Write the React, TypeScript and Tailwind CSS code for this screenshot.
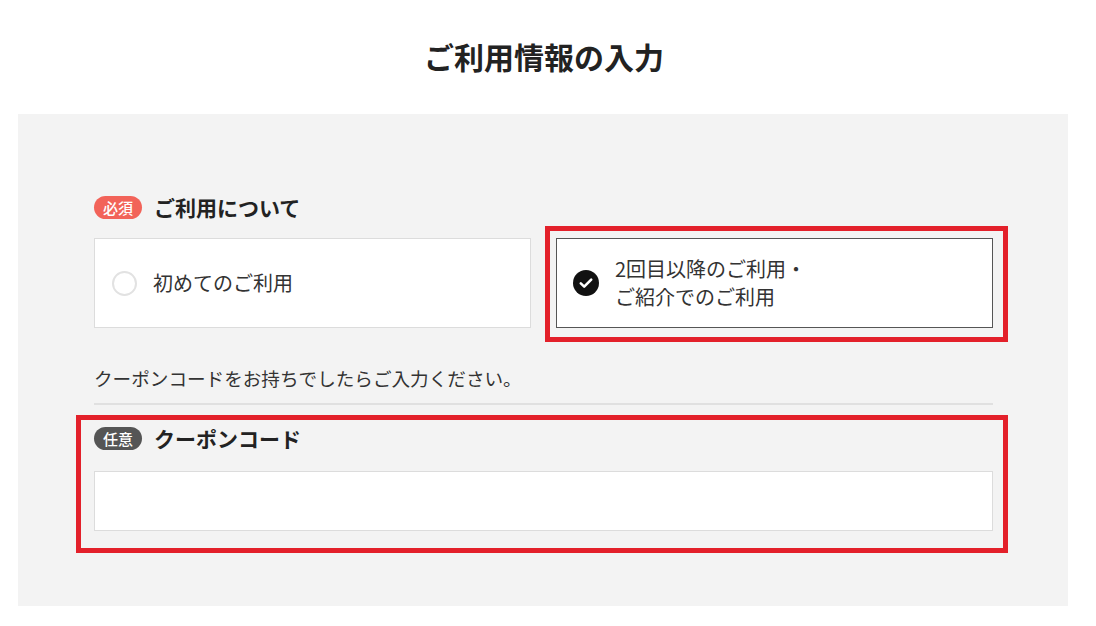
import React from "react";

const font = {
  fontFamily: '"Noto Sans CJK JP", "Noto Sans", sans-serif',
};

function CheckCircle() {
  return (
    <svg width="26" height="26" viewBox="0 0 26 26" className="shrink-0">
      <circle cx="13" cy="13" r="13" fill="#111" />
      <path
        d="M7.8 13.4 L11.2 16.6 L18.2 9.6"
        fill="none"
        stroke="#fff"
        strokeWidth="2.6"
        strokeLinecap="round"
        strokeLinejoin="round"
      />
    </svg>
  );
}

export default function App() {
  return (
    <div
      className="w-[1096px] h-[626px] bg-white text-[#333]"
      style={font}
    >
      <div className="h-[114px] flex items-center justify-center pr-[8px]">
        <h1 className="text-[30px] font-bold text-[#222] leading-none -mt-[2px]">
          ご利用情報の入力
        </h1>
      </div>
      <div className="ml-[18px] mr-[28px] bg-[#f3f3f3] pt-[82px] pb-[75px] pl-[76px] pr-[75px]">
        <div className="relative">
          <div className="flex items-center h-[23px] gap-[12px]">
            <span className="h-[23px] w-[48px] rounded-full bg-[#f26359] text-white text-[15px] font-medium leading-none flex items-center justify-center">
              必須
            </span>
            <span className="text-[21px] font-bold text-[#222] leading-none">
              ご利用について
            </span>
          </div>
          <div className="grid grid-cols-2 gap-[25px] mt-[19px]">
            <div className="h-[90px] bg-white border border-[#dcdcdc] flex items-center pl-[17px] gap-[16px]">
              <span className="w-[25px] h-[25px] rounded-full border-2 border-[#e2e2e2] bg-white shrink-0" />
              <span className="text-[20px] leading-[28px]">初めてのご利用</span>
            </div>
            <div className="h-[90px] bg-white border border-[#555] flex items-center pl-[16px] gap-[16px]">
              <CheckCircle />
              <span className="text-[20px] leading-[28px]">
                2回目以降のご利用・
                <br />
                ご紹介でのご利用
              </span>
            </div>
          </div>
          <p className="mt-[36px] text-[18.6px] leading-[27px] pb-[12px] border-b-2 border-[#e0e0e0]">
            クーポンコードをお持ちでしたらご入力ください。
          </p>
          <div className="flex items-center h-[23px] gap-[12px] mt-[22px]">
            <span className="h-[23px] w-[48px] rounded-full bg-[#555] text-white text-[15px] font-medium leading-none flex items-center justify-center">
              任意
            </span>
            <span className="text-[21px] font-bold text-[#222] leading-none">
              クーポンコード
            </span>
          </div>
          <input
            type="text"
            className="mt-[21px] block w-full h-[60px] bg-white border border-[#dcdcdc] outline-none px-3 text-[18px]"
          />
          <div className="absolute left-[451px] top-[30px] w-[463px] h-[116px] border-[5px] border-[#e3202a] pointer-events-none" />
          <div className="absolute -left-[18px] top-[219px] w-[932px] h-[138px] border-[5px] border-[#e3202a] pointer-events-none" />
        </div>
      </div>
    </div>
  );
}
